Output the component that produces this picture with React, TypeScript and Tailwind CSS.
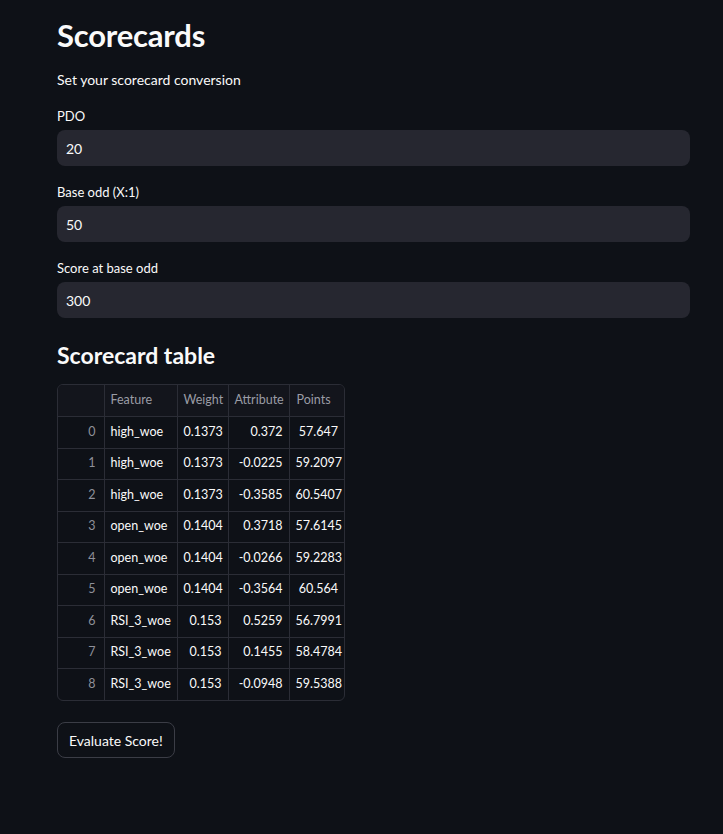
import React from 'react';

const rows = [
    ['high_woe', '0.1373', '0.372', '57.647'],
    ['high_woe', '0.1373', '-0.0225', '59.2097'],
    ['high_woe', '0.1373', '-0.3585', '60.5407'],
    ['open_woe', '0.1404', '0.3718', '57.6145'],
    ['open_woe', '0.1404', '-0.0266', '59.2283'],
    ['open_woe', '0.1404', '-0.3564', '60.564'],
    ['RSI_3_woe', '0.153', '0.5259', '56.7991'],
    ['RSI_3_woe', '0.153', '0.1455', '58.4784'],
    ['RSI_3_woe', '0.153', '-0.0948', '59.5388'],
];

const fields = [
    { label: 'PDO', value: '20' },
    { label: 'Base odd (X:1)', value: '50' },
    { label: 'Score at base odd', value: '300' },
];

const NumberField = ({ label, value }: { label: string; value: string }) => (
    <div className="flex flex-col">
        <label className="text-[13px] leading-[16px] text-[#fafafa] mb-[6px]">{label}</label>
        <div className="h-9 rounded-lg bg-[#262730] flex items-center px-[9px] text-[14px] text-[#fafafa]">
            {value}
        </div>
    </div>
);

export default function App() {
    return (
        <div
            className="min-h-[834px] w-full bg-[#0e1117] text-[#fafafa]"
            style={{ fontFamily: 'Lato, "Noto Sans", sans-serif' }}
        >
            <div className="pl-[57px] pr-[33px] pt-[15px]">
                <h1 className="text-[31px] leading-[40px] font-bold tracking-[-0.2px]">Scorecards</h1>
                <p className="mt-[15px] text-[14px] leading-[20px]">Set your scorecard conversion</p>

                <div className="mt-[18px] flex flex-col gap-[18px]">
                    {fields.map((f) => (
                        <NumberField key={f.label} label={f.label} value={f.value} />
                    ))}
                </div>

                <h2 className="mt-[22px] text-[23px] leading-[30px] font-bold">Scorecard table</h2>

                <div className="mt-[14px] w-[288px] rounded-md border border-[#2b2d36] overflow-hidden">
                    <table className="border-collapse text-[12.5px] w-full table-fixed">
                        <thead>
                            <tr className="h-[31.5px] bg-[#13151c] text-[#9a9ca5] border-b border-[#2b2d36]">
                                <th className="w-[46px] border-r border-[#2b2d36]"></th>
                                <th className="w-[73px] border-r border-[#2b2d36] text-left font-normal px-[6px]">Feature</th>
                                <th className="w-[51px] border-r border-[#2b2d36] text-left font-normal px-[6px]">Weight</th>
                                <th className="w-[61px] border-r border-[#2b2d36] text-left font-normal px-[6px]">Attribute</th>
                                <th className="text-left font-normal px-[7px]">Points</th>
                            </tr>
                        </thead>
                        <tbody>
                            {rows.map((r, i) => (
                                <tr key={i} className="h-[31.5px] border-b last:border-b-0 border-[#2b2d36]">
                                    <td className="border-r border-[#2b2d36] text-right pr-2 text-[#8e9099]">{i}</td>
                                    <td className="border-r border-[#2b2d36] px-[6px]">{r[0]}</td>
                                    <td className="border-r border-[#2b2d36] text-right px-[6px]">{r[1]}</td>
                                    <td className="border-r border-[#2b2d36] text-right px-[6px]">{r[2]}</td>
                                    <td className="text-right px-[6px]">{r[3]}</td>
                                </tr>
                            ))}
                        </tbody>
                    </table>
                </div>

                <button className="mt-[21px] h-9 px-[11px] rounded-lg border border-[#3b3d46] bg-[#0e1117] text-[14px] text-[#fafafa]">
                    Evaluate Score!
                </button>
            </div>
        </div>
    );
}
